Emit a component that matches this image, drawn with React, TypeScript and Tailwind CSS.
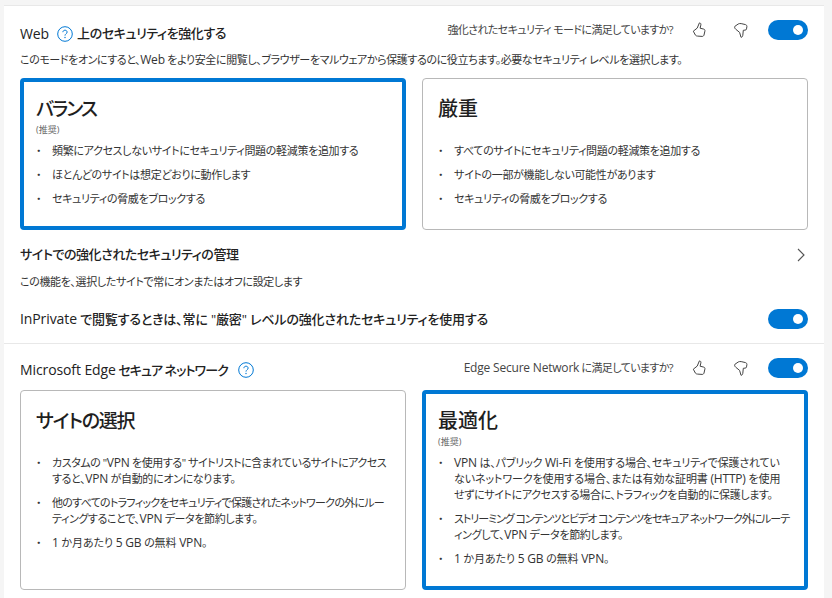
import React from "react";

const L = ({ children }: { children: React.ReactNode }) => (
  <span className="text-[12px] tracking-[-0.2px]">{children}</span>
);
const T = ({ children }: { children: React.ReactNode }) => (
  <span className="text-[14px] font-medium tracking-[-0.1px]">{children}</span>
);

const Help = ({ className = "" }: { className?: string }) => (
  <svg width="16" height="16" viewBox="0 0 16 16" fill="none" className={className}>
    <circle cx="8" cy="8" r="7.3" stroke="#0078d4" strokeWidth="1" />
    <path d="M5.9 6.2c0-1.2.9-2 2.1-2s2.1.8 2.1 1.9c0 1.7-2.1 1.7-2.1 3.5" stroke="#0078d4" strokeWidth="1" />
    <circle cx="8" cy="11.5" r=".7" fill="#0078d4" />
  </svg>
);

const ThumbUp = () => (
  <svg width="14" height="16" viewBox="0 0 14 16" fill="none" stroke="#444" strokeWidth="1" strokeLinejoin="round">
    <path d="M1.3 9.2 5.2 6.1 7.4.9c1.3 0 1.7 1 1.4 2.2L8.1 6.2l3.6.9c1.1.3 1.4 1.1 1.2 2l-.9 3.9c-.3 1-1 1.5-2 1.4l-4.4-.3c-1 0-1.6-.4-2.2-1z" />
  </svg>
);

const ThumbDown = () => (
  <svg width="14" height="15" viewBox="0 0 14 15" fill="none" stroke="#444" strokeWidth="1" strokeLinejoin="round">
    <path d="M.8 3.4 4.2 1c.9-.5 2-.6 3-.4l4.3 1c.9.3 1.5 1 1.4 2l-.4 2.3c-.1.8-.6 1.2-1.3 1.2L9.3 7.3 8.8 12.3c-.2 1.4-.9 2-1.8 2L5.6 9.4 1.7 6.2C.8 5.4.3 4.2.8 3.4z" />
  </svg>
);

const Toggle = () => (
  <div className="flex h-5 w-10 shrink-0 items-center justify-end rounded-full bg-[#0078d4] pr-[5px]">
    <div className="h-[10px] w-[10px] rounded-full bg-white" />
  </div>
);

const Feedback = ({ text }: { text: React.ReactNode }) => (
  <div className="flex items-center">
    <span className="text-[11px] tracking-[-0.6px] text-[#444]">{text}</span>
    <span className="ml-[19px] flex w-[14px] justify-center"><ThumbUp /></span>
    <span className="ml-[28px] flex w-[14px] justify-center"><ThumbDown /></span>
    <span className="ml-[20px]"><Toggle /></span>
  </div>
);

type CardProps = {
  title: string;
  titleClass?: string;
  rec?: boolean;
  selected?: boolean;
  items: React.ReactNode[];
  className: string;
};

const Card = ({ title, titleClass = "", rec, selected, items, className }: CardProps) => (
  <div
    className={
      "rounded-[4px] bg-white " +
      className +
      (selected ? " border-[4px] border-[#0078d4] px-[12px]" : " border border-[#b8b8b8] px-[15px]")
    }
  >
    <div className={selected ? "" : "pt-[3px]"}>
      <div className={"flex h-[30px] items-center font-medium leading-none text-[#1f1f1f] " + titleClass}>{title}</div>
      <div className="-mt-[2px] flex h-[14px] items-center text-[9px] leading-none text-[#666]">{rec ? "(推奨)" : ""}</div>
    </div>
    <ul className="mt-[7px] flex flex-col gap-[8px]">
      {items.map((t, i) => (
        <li key={i} className="flex text-[11px] leading-[16px] tracking-[-0.33px] text-[#333]">
          <span className="w-[16px] shrink-0 leading-[16px]">・</span>
          <span className="whitespace-nowrap">{t}</span>
        </li>
      ))}
    </ul>
  </div>
);

export default function App() {
  return (
    <div className="h-[598px] w-[832px] overflow-hidden bg-[#f5f5f5] pl-[4px] pr-[8px] [font-feature-settings:'palt'] [font-family:'Open_Sans','Noto_Sans_CJK_JP',sans-serif]">
      <div className="h-[5px]" />
      <div className="h-[593px] border-t border-[#e8e8e8] bg-white">
        <section className="flex h-[338px] flex-col border-b border-[#e8e8e8] px-[16px]">
          <div className="mt-[14px] flex h-[20px] items-center justify-between">
            <div className="mt-[7px] flex items-center text-[13px] font-medium tracking-[-0.4px] text-[#222]">
              <T>Web</T>
              <Help className="ml-[8px] mr-[4px]" />
              <span>上のセキュリティを強化する</span>
            </div>
            <Feedback text="強化されたセキュリティ モードに満足していますか?" />
          </div>
          <p className="mt-[11px] h-[18px] text-[11px] leading-[18px] tracking-[-0.4px] text-[#333]">
            このモードをオンにすると、<L>Web</L> をより安全に閲覧し、ブラウザーをマルウェアから保護するのに役立ちます。必要なセキュリティ レベルを選択します。
          </p>
          <div className="mt-[9px] grid grid-cols-2 gap-[16px]">
            <Card
              className="h-[152px] pt-[12px]"
              titleClass="text-[19px] tracking-[-2px]"
              title="バランス"
              rec
              selected
              items={[
                "頻繁にアクセスしないサイトにセキュリティ問題の軽減策を追加する",
                "ほとんどのサイトは想定どおりに動作します",
                "セキュリティの脅威をブロックする",
              ]}
            />
            <Card
              className="h-[152px] pt-[12px]"
              titleClass="text-[20px]"
              title="厳重"
              items={[
                "すべてのサイトにセキュリティ問題の軽減策を追加する",
                "サイトの一部が機能しない可能性があります",
                "セキュリティの脅威をブロックする",
              ]}
            />
          </div>
          <div className="mt-[15px] flex h-[20px] items-center justify-between">
            <span className="text-[13px] font-medium tracking-[-0.45px] text-[#222]">サイトでの強化されたセキュリティの管理</span>
            <svg width="8" height="14" viewBox="0 0 8 14" fill="none" className="mr-[3px]" stroke="#555" strokeWidth="1.1">
              <path d="M1 1l6 6-6 6" />
            </svg>
          </div>
          <p className="mt-[8px] h-[18px] text-[11px] leading-[18px] tracking-[-0.36px] text-[#333]">
            この機能を、選択したサイトで常にオンまたはオフに設定します
          </p>
          <div className="mt-[18px] flex h-[20px] items-center justify-between">
            <span className="text-[13px] font-medium tracking-[-0.15px] text-[#222]"><T>InPrivate</T> で閲覧するときは、常に "厳密" レベルの強化されたセキュリティを使用する</span>
            <Toggle />
          </div>
        </section>
        <section className="flex flex-col px-[16px]">
          <div className="mt-[14px] flex h-[20px] items-center justify-between">
            <div className="mt-[4px] flex items-center text-[13px] font-medium tracking-[-0.9px] text-[#222]">
              <span><T>Microsoft Edge</T> セキュア ネットワーク</span>
              <Help className="ml-[10px]" />
            </div>
            <Feedback text={<><L>Edge Secure Network</L> に満足していますか?</>} />
          </div>
          <div className="mt-[12px] grid grid-cols-2 gap-[16px]">
            <Card
              className="h-[200px] pt-[12px]"
              titleClass="text-[19px] tracking-[-1.2px]"
              title="サイトの選択"
              items={[
                <><span className="tracking-[-0.45px]">カスタムの "<L>VPN</L> を使用する" サイトリストに含まれているサイトにアクセス</span><br />すると、<L>VPN</L> が自動的にオンになります。</>,
                <><span className="tracking-[-0.73px]">他のすべてのトラフィックをセキュリティで保護されたネットワークの外にルー</span><br /><span className="tracking-[-0.4px]">ティングすることで、<L>VPN</L> データを節約します。</span></>,
                <span className="tracking-[-0.1px]"><L>1</L> か月あたり <L>5 GB</L> の無料 <L>VPN</L>。</span>,
              ]}
            />
            <Card
              className="h-[200px] pt-[12px]"
              titleClass="text-[20px]"
              title="最適化"
              rec
              selected
              items={[
                <><span className="tracking-[-0.18px]"><L>VPN</L> は、パブリック <L>Wi-Fi</L> を使用する場合、セキュリティで保護されてい</span><br /><span className="tracking-[-0.1px]">ないネットワークを使用する場合、または有効な証明書 <L>(HTTP)</L> を使用</span><br /><span className="tracking-[-0.38px]">せずにサイトにアクセスする場合に、トラフィックを自動的に保護します。</span></>,
                <><span className="tracking-[-1.05px]">ストリーミング コンテンツとビデオ コンテンツをセキュア ネットワーク外にルーテ</span><br />ィングして、<L>VPN</L> データを節約します。</>,
                <span className="tracking-[-0.1px]"><L>1</L> か月あたり <L>5 GB</L> の無料 <L>VPN</L>。</span>,
              ]}
            />
          </div>
        </section>
      </div>
    </div>
  );
}
